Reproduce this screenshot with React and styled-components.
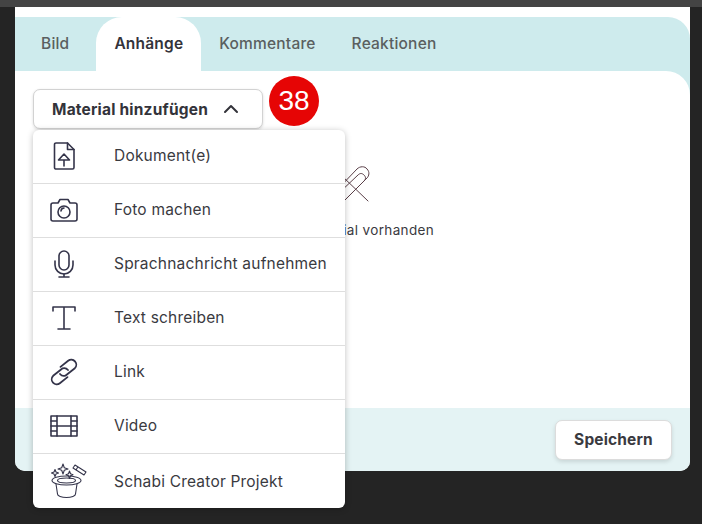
import React from 'react'
import styled, { createGlobalStyle } from 'styled-components'

const Global = createGlobalStyle`
  html, body {
    margin: 0;
    background: #242424;
    font-family: Inter, "Noto Sans", sans-serif;
    letter-spacing: 0.2px;
    color: #3a3a3f;
  }
`

const Page = styled.div`
  width: 702px;
  height: 524px;
  overflow: hidden;
  display: flex;
  flex-direction: column;
`

const TopBar = styled.div`
  height: 7px;
  background: #444;
  flex: none;
`

const Panel = styled.div`
  position: relative;
  width: 675px;
  height: 464px;
  margin-left: 15px;
  padding-top: 10px;
  box-sizing: border-box;
  background: #fff;
  border-radius: 0 0 10px 10px;
  display: flex;
  flex-direction: column;
`

const Head = styled.div`
  background: #ceebed;
  border-radius: 0 22px 0 0;
  flex: 1;
  display: flex;
  flex-direction: column;
`

const Tabs = styled.div`
  display: flex;
  height: 54px;
  flex: none;
`

const Tab = styled.div`
  display: flex;
  align-items: center;
  padding: 0 18px 2px;
  font-size: 15.5px;
  font-weight: ${p => (p.$active ? 600 : 500)};
  color: ${p => (p.$active ? '#33333a' : '#5a5f60')};
  background: ${p => (p.$active ? '#fff' : 'transparent')};
  border-radius: 26px 26px 0 0;
  &:first-child {
    padding-left: 26px;
    padding-right: 27px;
  }
`

const Body = styled.div`
  flex: 1;
  background: #fff;
  border-radius: 0 24px 0 0;
  display: flex;
  flex-direction: column;
  align-items: center;
  padding-top: 93px;
`

const Empty = styled.div`
  font-size: 13.5px;
  letter-spacing: 0.36px;
  margin-top: 20px;
  color: #3a3a3f;
`

const Footer = styled.div`
  height: 63px;
  flex: none;
  background: #e4f3f4;
  border-radius: 0 0 10px 10px;
  display: flex;
  align-items: center;
  justify-content: flex-end;
  padding-right: 18px;
`

const SaveButton = styled.button`
  width: 117px;
  height: 40px;
  background: #fff;
  border: 1px solid #dcdcdc;
  border-radius: 7px;
  box-shadow: 0 2px 4px rgba(0, 0, 0, 0.12);
  font: 700 15.5px Inter, sans-serif;
  letter-spacing: 0.15px;
  color: #3a3a3f;
  padding: 0;
`

const MenuWrap = styled.div`
  position: absolute;
  left: 18px;
  top: 82px;
  width: 312px;
`

const AddButton = styled.div`
  width: 230px;
  height: 40px;
  box-sizing: border-box;
  background: #fff;
  border: 1px solid #d2d2d2;
  border-radius: 7px;
  box-shadow: 0 1px 3px rgba(0, 0, 0, 0.14);
  display: flex;
  align-items: center;
  gap: 15px;
  padding-left: 18px;
  font-size: 15.5px;
  font-weight: 700;
  color: #33333a;
`

const Badge = styled.div`
  position: absolute;
  left: 236px;
  top: -13px;
  width: 50px;
  height: 50px;
  border-radius: 50%;
  background: #e60505;
  color: #fff;
  font: 28px "Liberation Sans", sans-serif;
  letter-spacing: 0;
  display: flex;
  align-items: center;
  justify-content: center;
`

const Menu = styled.div`
  margin-top: 1px;
  background: #fff;
  border-radius: 6px;
  box-shadow: 0 1px 6px rgba(0, 0, 0, 0.25);
  overflow: hidden;
`

const Row = styled.div`
  display: grid;
  grid-template-columns: 61px 1fr;
  column-gap: 20px;
  align-items: center;
  height: 54px;
  padding-bottom: 2px;
  box-sizing: border-box;
  border-bottom: 1px solid #dedede;
  font-size: 15.5px;
  color: #3a3a3f;
  &:last-child {
    border-bottom: 0;
    padding-bottom: 0;
  }
`

const IconCell = styled.div`
  display: flex;
  justify-content: center;
  align-items: center;
`

const Glyph = styled.svg`
  display: block;
  fill: none;
  stroke: ${p => p.$color || '#34344a'};
  stroke-width: ${p => p.$weight || 1.6};
  stroke-linecap: round;
  stroke-linejoin: round;
`

const HatGlyph = styled(Glyph)`
  margin-left: 11px;
`

const DocIcon = () => (
  <Glyph width="22" height="28" viewBox="0 0 22 28">
    <path d="M3 1h11.500l6.500 6.500v18a1.500 1.500 0 0 1-1.500 1.500h-17A1.500 1.500 0 0 1 1.500 25.500V2.500A1.500 1.500 0 0 1 3 1z" />
    <path d="M14.500 1v6.500H21" />
    <path d="M11 12l-5.500 6h11zM11 18v6" />
  </Glyph>
)

const CameraIcon = () => (
  <Glyph width="28" height="24" viewBox="0 0 28 24">
    <path d="M3 5h5l2-3.500h8L20 5h5a2 2 0 0 1 2 2v14a2 2 0 0 1-2 2H3a2 2 0 0 1-2-2V7a2 2 0 0 1 2-2z" />
    <circle cx="14" cy="14" r="6" />
    <path d="M11 13a3.200 3.200 0 0 1 3-3" />
  </Glyph>
)

const MicIcon = () => (
  <Glyph width="20" height="28" viewBox="0 0 20 28">
    <rect x="5" y="1" width="10" height="19" rx="5" />
    <path d="M1 11v4a9 9 0 0 0 18 0v-4" />
    <path d="M10 24v3M5 27h10" />
  </Glyph>
)

const TextIcon = () => (
  <Glyph width="24" height="24" viewBox="0 0 24 24">
    <path d="M1 5V1h22v4M12 1v22M6 23h12" />
  </Glyph>
)

const LinkIcon = () => (
  <Glyph width="28" height="28" viewBox="0 0 28 28" $weight={1.8}>
    <path d="M10.500 8.900l7.650-6.100a5 5 0 0 1 6.700 7.400l-9.500 7.500A5 5 0 0 1 10 16" />
    <path d="M17.500 19.100l-7.650 6.100a5 5 0 0 1-6.700-7.400l9.500-7.500A5 5 0 0 1 18 12" />
  </Glyph>
)

const FilmIcon = () => (
  <Glyph width="28" height="22" viewBox="0 0 28 22">
    <rect x="1" y="1" width="26" height="20" />
    <path d="M7 1v20M21 1v20M1 6h6M1 11h6M1 16h6M21 6h6M21 11h6M21 16h6M7 11h14" />
  </Glyph>
)

const HatIcon = () => (
  <HatGlyph width="36" height="36" viewBox="0 0 36 36" $weight={1.1}>
    <ellipse cx="15.500" cy="17.500" rx="14.500" ry="4.500" />
    <ellipse cx="15.500" cy="17.500" rx="9" ry="2.500" />
    <path d="M5 21l1.500 10c0 2 4 3.500 9 3.500s9-1.500 9-3.500L26 21" />
    <path d="M12 1l1.300 3.700L17 6l-3.700 1.300L12 11l-1.300-3.700L7 6l3.700-1.300z" />
    <path d="M4 6.500l1 2.500 2.500 1L5 11l-1 2.500L3 11 .5 10 3 9z" />
    <path d="M18.500 8l1 2.700 2.500 1-2.500 1-1 2.800-1-2.800-2.500-1 2.500-1z" />
    <path d="M22 5l2-3 11 7-2 3zM25 7l1.500-2.500" />
  </HatGlyph>
)

const ClipIcon = () => (
  <Glyph width="38" height="38" viewBox="0 0 38 38" $color="#5a3f48" $weight={1}>
    <path d="M2 27L23 5c3-3 8-3 10 0 3 3 2 7 0 9L12 35" />
    <path d="M5 29L24 11c2-2 4-2 6 0s2 4 0 6L11 36" />
    <path d="M8 12l26 25" />
  </Glyph>
)

const Chevron = () => (
  <Glyph width="16" height="10" viewBox="0 0 16 10" $color="#33333a" $weight={2}>
    <path d="M2 8l6-6 6 6" />
  </Glyph>
)

const items = [
  ['Dokument(e)', DocIcon],
  ['Foto machen', CameraIcon],
  ['Sprachnachricht aufnehmen', MicIcon],
  ['Text schreiben', TextIcon],
  ['Link', LinkIcon],
  ['Video', FilmIcon],
  ['Schabi Creator Projekt', HatIcon],
]

export default function App() {
  return (
    <Page>
      <Global />
      <TopBar />
      <Panel>
        <Head>
          <Tabs>
            <Tab>Bild</Tab>
            <Tab $active>Anhänge</Tab>
            <Tab>Kommentare</Tab>
            <Tab>Reaktionen</Tab>
          </Tabs>
          <Body>
            <ClipIcon />
            <Empty>Kein Material vorhanden</Empty>
          </Body>
        </Head>
        <Footer>
          <SaveButton>Speichern</SaveButton>
        </Footer>
        <MenuWrap>
          <AddButton>
            Material hinzufügen
            <Chevron />
          </AddButton>
          <Badge>38</Badge>
          <Menu>
            {items.map(([label, Icon]) => (
              <Row key={label}>
                <IconCell><Icon /></IconCell>
                {label}
              </Row>
            ))}
          </Menu>
        </MenuWrap>
      </Panel>
    </Page>
  )
}
